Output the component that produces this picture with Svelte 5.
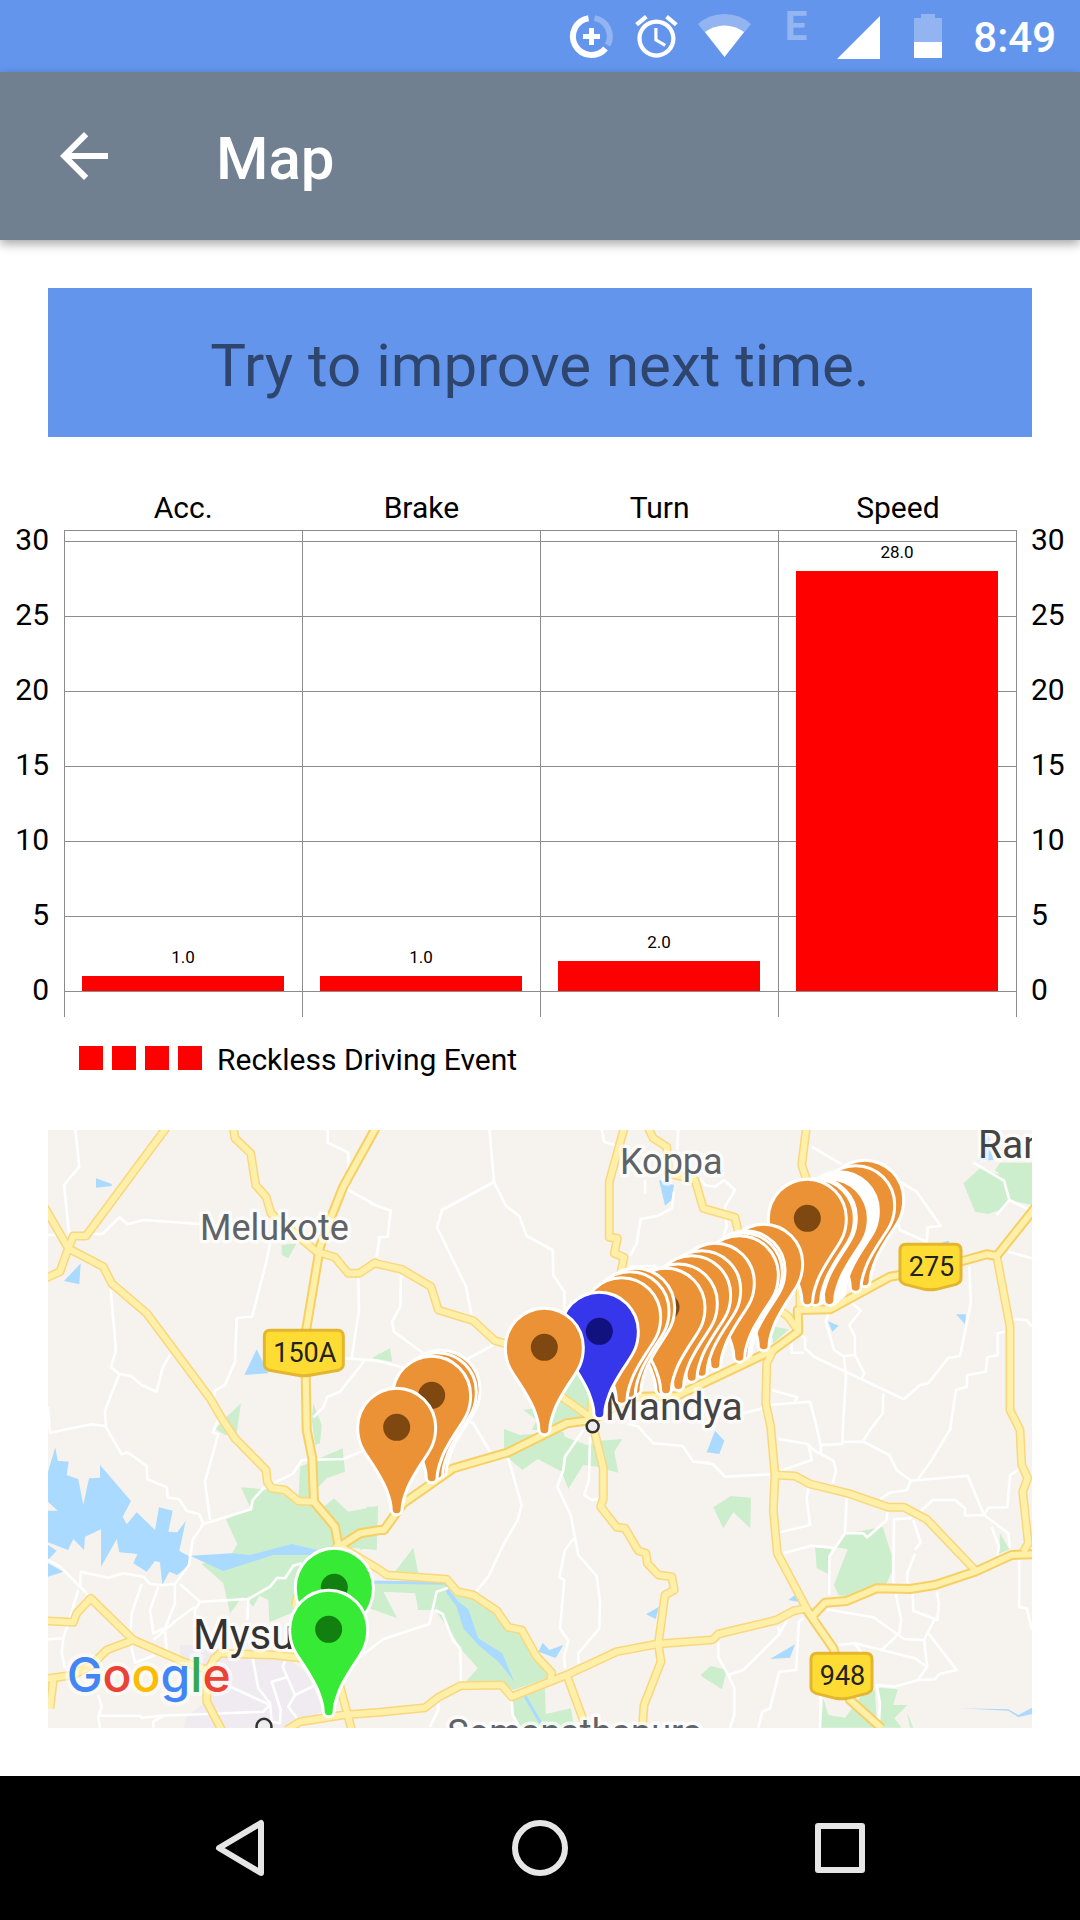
<script>
  const events = [
    { name: 'Acc.', value: 1 },
    { name: 'Brake', value: 1 },
    { name: 'Turn', value: 2 },
    { name: 'Speed', value: 28 }
  ];
  const ticks = [30, 25, 20, 15, 10, 5, 0];
  const unit = 15;

  // Map geometry is stored per tile, three tile units to one map unit.
  const tiles = {
    A: [-8, -10], B: [322, -10], C: [652, -10],
    D: [-8, 290], E: [322, 290], F: [652, 290]
  };
  let origin = tiles.A;
  function at(tile, x, y) {
    const [ox, oy] = tiles[tile];
    return [ox + x / 3, oy + y / 3];
  }
  function points(text) {
    return text.split(' ').map((p) => {
      if (tiles[p[0]]) {
        origin = tiles[p[0]];
        p = p.slice(1);
      }
      const [x, y] = p.split(',').map(Number);
      return (origin[0] + x / 3).toFixed(1) + ',' + (origin[1] + y / 3).toFixed(1);
    }).join(' ');
  }
  const shapes = (text) => text.trim().split('\n').map((line) => points(line.trim()));

  const parks = shapes(`
    A725,375 770,370 745,415 725,405
    A603,850 560,890 528,925 D530,30 555,45 590,40
    A820,850 845,915 D840,70 825,75 815,0
    A1020,700 1000,713 1020,725
    B5,715 60,685 67,725
    D603,202 695,210 775,243 780,140 908,85 915,155 860,175 822,215 840,270 882,235 925,275 1014,258 1010,390 895,380 840,450 800,560 688,607 685,540 658,527 640,560 608,530 570,580 550,490 485,432 575,402 592,372 557,298 633,268
    E-10,260 24,260 20,345 0,380 -30,390
    E75,455 130,383 145,460
    E-40,485 230,485 240,520 310,525 380,590 415,630 455,635 545,770 430,810 390,795 290,782 323,745 275,690 245,640 195,570 145,570 135,520 40,515 82,595 -30,555
    E427,840 525,800 527,882 603,865 612,925 445,920 428,885
    E402,27 450,45 580,35 585,50 650,75 690,62 757,57 733,95 745,158 680,140 640,135 595,207 575,155 503,117 457,150 415,115 402,100
    B460,870 555,855 580,810 628,755 660,840 660,880 560,930 485,930 500,900
    C210,618 268,628 220,670
    C790,190 840,145 900,165 885,150 900,128 996,128 996,255 928,240 900,270 865,282 825,275
    F40,262 92,228 153,233 151,325 100,277 70,325
    F345,382 393,388 385,462 350,445
    F408,382 435,343 548,320 575,405 575,455 560,490 530,505 440,530 415,525 402,495 443,388
    F900,340 928,388 897,402
    F2,767 32,738 80,750 66,808
    E992,765 1020,740 1020,785
    F370,835 385,885 435,893 490,820 525,810 530,910 545,923 363,923
    F535,803 593,808 580,855 622,855 583,895 605,923 540,923
    F620,875 640,923 630,923`);

  const waters = shapes(`
    A168,175 215,192 215,198 168,203
    A122,430 118,493 72,483
    A650,688 685,760 613,765
    B867,180 912,195 905,240 885,257
    C865,40 880,120 835,122
    C383,603 416,617 397,635
    C768,583 798,583 795,613
    C725,368 745,362 750,372
    C160,655 175,630 170,655
    F45,32 73,62 58,102 20,97
    F265,540 285,525 295,545
    F210,717 285,673 270,713
    E828,583 867,560 857,597
    E518,668 538,690 580,675 557,714 505,695
    F780,865 925,868 955,885 996,863 996,882 955,892 925,872
    D24,155 46,82 53,122 86,125 80,165 115,178 130,255 147,175 180,173 180,135 273,243 248,290 260,313 290,277 345,330 357,262 398,272 385,335 412,337 437,303 418,393 450,410 447,435 412,465 388,455 367,495 360,427 345,423 320,455 280,430 292,402 238,397 230,358 183,440 183,328 135,350 132,390 100,357 84,390 24,367 24,272 53,272 24,245
    D24,375 50,392 24,420
    D24,430 70,455 24,470
    D450,407 575,400 630,405 755,372 845,393 810,405 700,405 550,453
    E225,490 265,545 295,568 325,655 397,700 433,785 385,725 325,675 280,625 260,560 230,520`);

  const streams = shapes(`
    D990,486 E225,490
    E465,828 515,915`);

  const urban = points('D420,675 455,675 540,705 740,710 800,760 850,870 770,923 430,923 440,890 490,850 490,760 420,735');

  const lanes = shapes(`
    A105,20 118,140 72,195 88,345
    A24,345 80,345
    A150,343 188,341 238,292 263,313 310,300 480,312
    A690,370 678,430 636,590 590,594 585,725 555,795 525,812 520,840 540,890 D530,10 518,38 535,42 495,185 510,300
    A212,510 228,690 213,742 238,762 195,872 198,920 D197,20 245,103 263,97 320,138 322,178 381,202 383,233 416,237 440,272 478,283 490,312 458,360 447,435 405,492 405,550 375,625 340,640 330,570 355,500
    A238,762 273,768 305,795 350,815 368,742 390,705
    A24,860 D30,38 155,13 197,18
    D490,312 633,268 638,240 670,205 760,160 785,120 910,117 975,90
    A975,720 900,815 862,830 850,862 820,892
    A910,715 1020,722
    A955,475 957,570 935,715
    A863,20 863,68 925,98 925,210 1020,262
    A1020,350 1010,410
    B358,20 372,186 216,270 201,322 288,500 304,582
    B372,186 408,258 448,288 470,348 548,390 550,465 583,515 583,570
    B0,250 62,272 53,350 28,352 20,410
    B93,465 91,560 66,605 72,635 158,698
    B0,718 100,742
    B290,718 370,675
    B693,20 703,65 735,75
    B925,20 922,90
    B825,180 825,222
    B912,215 905,265 865,287 812,297 800,370 780,408
    B780,440 860,437
    C335,80 425,133
    C590,180 650,215 722,318 683,322 680,365 600,330 590,300
    C820,128 912,182 928,240 890,285
    C928,240 990,270
    C0,175 15,195 45,200 72,180 105,210 75,260 80,320 70,350
    C925,395 996,415
    C808,440 812,550 780,708 745,713 685,790 660,795 612,838 490,780 345,712 315,685 315,655 300,640
    C275,640 275,698 312,698
    C455,548 482,572 448,615 465,650 465,705 430,708 402,690 378,605 388,570
    C465,705 493,760 485,775
    C432,712 438,770 430,900 F427,72 362,75 345,0 C330,845 205,855
    C215,810 292,832 285,845
    C130,880 188,865
    C550,820 548,880 510,930 F490,62
    F362,75 362,100
    F427,65 490,65 568,105 590,150 633,182 620,210 570,218 540,237
    C935,597 980,600 996,620
    C915,635 893,640 893,705 862,712 857,755 802,765 800,800 768,810 750,930 F752,25 695,120 650,182
    F633,182 803,167 852,285 795,287 795,265 765,240 698,240 660,275
    F852,285 925,340 930,385
    F852,285 865,263 922,262 930,165 955,150
    F875,320 897,380 892,405
    F958,420 958,562 980,565 996,630
    F235,57 325,72 340,90 400,122 408,152 398,190
    F325,72 335,120 235,155
    F325,205 320,235 330,315 240,337
    F440,235 435,340 388,410 388,525
    F435,340 490,340 502,352 560,300 562,275
    F250,400 335,377 405,383
    F635,295 582,298 580,480 603,600 598,640 545,690
    F640,300 662,368 645,388
    F645,402 622,460 622,490
    F638,520 640,572 712,600 717,550 710,515
    F705,595 672,660 682,740 655,778
    F685,640 770,750 718,762 705,778 655,780 583,800 530,795 540,850 537,905
    F672,660 612,657 520,592 380,568
    F415,675 465,670 545,690 645,715 680,740
    F465,670 485,700
    F0,128 38,132 75,170 210,163
    F55,665 55,712 85,765 103,805 103,885 90,923
    F85,765 130,750 235,645 265,595
    F235,620 240,645
    F310,595 297,605 288,750 238,755 210,865 187,875 175,923
    F362,825 360,923
    D24,420 60,440 120,500 145,525
    D120,500 122,455 205,473 250,460 310,470 330,492 365,495 405,492
    D305,492 275,580 270,660 285,728 345,705
    D24,658 70,655 115,510
    D70,655 65,700 75,745
    D420,492 480,545 625,537 690,500 712,473 735,475 760,437 785,430
    D625,537 622,600
    D480,545 465,570 465,620
    D375,635 380,690
    D340,660 410,600 465,560
    D175,825 185,860 175,890 180,923
    D175,887 300,887 305,893 365,887 670,875 690,855 560,795
    D340,923 340,905 370,887
    D635,700 655,805 690,850 695,905 720,910 722,870 695,785 740,772
    D740,710 728,740 765,825 745,860 775,900
    D765,825 835,792
    D940,725 1020,665 E40,657 178,612 200,515 235,503
    E195,570 218,582 248,660 270,685 273,785
    E415,115 455,255 443,300 400,375 355,470 318,515
    E285,0 310,10 360,95
    E640,30 585,110 580,150 562,200 602,285 625,405 680,468 690,545 688,625 625,700 625,730
    E612,355 585,390 568,472 583,480 570,625 595,662 582,710 585,745
    E660,50 657,180 643,225 665,240 685,237
    E770,10 805,20 850,70 938,78 970,125 1020,128
    E205,850 205,870 180,920
    E425,845 428,885 445,915`);

  const roads = shapes(`
    A385,15 138,348 100,348 85,385 60,455 10,478
    A10,255 85,385 190,440 215,490 320,580 510,835 545,895 D585,55 678,150 682,185 695,205 735,210 775,243 822,245
    A578,15 585,55 632,100 647,195 678,230 693,280 830,395 885,412 925,460 958,460 1005,428 B15,430 95,448 183,500 205,570 310,602 375,662 420,675
    D895,375 780,500 765,560
    D895,375 1020,450 E50,465 230,478 262,515 310,525 380,572 415,622 455,630 500,710 545,758 540,785
    C240,570 265,590 290,625
    C320,15 305,135 320,180 300,480 300,560
    B575,830 665,895
    B665,840 665,900
    B765,15 718,185 718,352 742,355 733,400 762,412 752,460
    B830,15 850,55 890,80 895,160 975,180 1000,265 C105,292 118,350
    C890,408 930,620 930,870 F960,30 965,135 983,175 968,215 985,370 970,395
    C220,690 200,730 197,850 F212,20 225,165 220,270 232,400 325,575 345,600
    F225,165 285,168 330,192 445,220 565,262 612,262 680,298 825,450
    E590,765 640,900 655,940
    E670,20 700,145 700,235 692,260 740,322 765,325 805,392 828,400 832,430 865,465 905,470 913,510 885,525 865,672 873,725 822,855 817,930
    D10,602 100,607 110,580 152,535 280,660 430,725 520,755
    D10,778 100,765 155,735 200,690 280,660
    D40,780 30,865
    D520,720 540,700 700,705 790,715
    D525,710 500,760 500,845 545,930
    D895,780 935,930
    D740,930 780,905 910,885 1020,877 E165,863 205,832 272,797 395,795 425,830 590,765 740,695 862,672 1020,660 F40,658 55,642 230,600 280,573 320,565`);

  const highways = shapes(`
    A1015,10 910,200 870,300 840,380 795,650 800,930 D817,115 822,245 885,320 897,385
    D890,385 960,340 1020,330 E42,330 100,250 250,145 415,97 590,10 665,0 B770,840 800,830 920,828 1020,780 C220,690 295,635 293,570 390,568 570,470 600,465 780,425 860,403 890,408 1020,245
    F335,590 375,548 440,543 530,505 630,507 705,495 825,455 935,405 1010,402
    F320,570 400,685 450,840 545,925`);

  const pins = [
    ['C', 494, 238], ['C', 467, 254], ['C', 418, 272], ['C', 414, 275], ['C', 409, 278],
    ['C', 405, 282], ['C', 401, 286], ['C', 397, 290], ['C', 393, 292],
    ['C', 388, 294], ['C', 352, 292], ['C', 346, 294], ['C', 322, 295], ['C', 191, 430],
    ['C', 138, 450], ['C', 130, 456], ['C', 118, 464], ['C', 46, 487], ['C', 5, 509],
    ['B', 965, 524], ['B', 925, 549], ['B', 874, 562], ['B', 888, 562], ['B', 797, 562],
    ['B', 780, 572], ['B', 755, 590], ['B', 688, 634, 'blue'], ['B', 523, 682],
    ['B', 213, 808], ['B', 202, 815], ['B', 185, 826], ['B', 80, 922],
    ['D', 883, 502, 'green'], ['D', 866, 628, 'green']
  ].map(([tile, x, y, color = 'orange']) => ({ pos: at(tile, x, y), color }));

  const shields = [
    { text: '150A', w: 81, pos: at('A', 670, 628) },
    { text: '275', w: 63, pos: at('C', 597, 370) },
    { text: '948', w: 63, pos: at('F', 330, 697) }
  ];
  const shieldPath = (w) =>
    `M7 1H${w - 7}Q${w - 1} 1 ${w - 1} 7V35Q${w - 1} 39 ${w - 6} 41L${w / 2 + 6} 46Q${w / 2} 47 ${w / 2 - 6} 46L6 41Q1 39 1 35V7Q1 1 7 1Z`;

  const places = [
    { text: 'Melukote', pos: at('A', 480, 359), kind: 'village' },
    { text: 'Koppa', pos: at('B', 750, 162), kind: 'village' },
    { text: 'Somanathapura', pos: at('E', 232, 975), kind: 'village' },
    { text: 'Mandya', pos: at('B', 704, 900), kind: 'town' },
    { text: 'Ramanagara', pos: at('C', 834, 115), kind: 'town' },
    { text: 'Mysuru', pos: at('D', 459, 688), kind: 'city' }
  ];
  const mandya = at('B', 668, 919);
  const mysuru = at('D', 672, 919);
  const logo = at('D', 80, 817);
</script>

<div class="page">
  <div class="status">
    <svg width="64" height="72" viewBox="560 0 64 72" aria-label="Data saver">
      <path class="ring faint" d="M594.500 18.100A18.500 18.500 0 0 1 607.600 45" />
      <path class="ring" d="M588.500 18.200A18.500 18.500 0 1 0 605.500 48.500" />
      <path class="ring thin" d="M583 36.500H600M591.500 28V45" />
    </svg>
    <svg width="64" height="72" viewBox="624 0 64 72" aria-label="Alarm">
      <path class="solid" transform="translate(631 11) scale(2.120)" d="M22 5.720l-4.600-3.860-1.290 1.530 4.600 3.860L22 5.720zM7.880 3.390L6.600 1.860 2 5.710l1.290 1.530 4.590-3.850zM12.500 8H11v6l4.750 2.850.75-1.230-4-2.370V8zM12 4c-4.970 0-9 4.030-9 9s4.020 9 9 9c4.970 0 9-4.030 9-9s-4.030-9-9-9zm0 16c-3.870 0-7-3.130-7-7s3.130-7 7-7 7 3.130 7 7-3.130 7-7 7z" />
    </svg>
    <svg width="72" height="72" viewBox="688 0 72 72" aria-label="Wi-Fi">
      <path class="dim" d="M724.500 57L698 24Q709 14 724.500 14T751 24Z" />
      <path class="solid" d="M724.500 57L705 32Q714 25.500 724.500 25.500T744 32Z" />
    </svg>
    <span class="network">E</span>
    <svg width="62" height="72" viewBox="832 0 62 72" aria-label="Signal">
      <path class="solid" d="M880 16V59H837Z" />
    </svg>
    <svg width="66" height="72" viewBox="894 0 66 72" aria-label="Battery">
      <path class="dim" d="M921 14H935V18H942V42H914V18H921Z" />
      <path class="solid" d="M914 42H942V58H914Z" />
    </svg>
    <time>8:49</time>
  </div>

  <header>
    <button class="back" aria-label="Back">
      <svg width="72" height="72" viewBox="0 0 24 24"><path class="solid" d="M20 11H7.830l5.590-5.590L12 4l-8 8 8 8 1.410-1.410L7.830 13H20v-2z" /></svg>
    </button>
    <h1>Map</h1>
  </header>

  <main>
    <p class="banner">Try to improve next time.</p>

    <section class="chart" aria-label="Reckless driving events">
      <div class="names">
        {#each events as e}<span>{e.name}</span>{/each}
      </div>
      <div class="axis left">
        {#each ticks as t}<span>{t}</span>{/each}
      </div>
      <div class="plot">
        <div class="lines">
          {#each ticks as t}<i></i>{/each}
        </div>
        <div class="columns">
          {#each events as e}
            <div class="column">
              <span>{e.value.toFixed(1)}</span>
              <div class="bar" style:height="{e.value * unit}px"></div>
            </div>
          {/each}
        </div>
      </div>
      <div class="axis right">
        {#each ticks as t}<span>{t}</span>{/each}
      </div>
    </section>

    <div class="legend">
      <div class="swatches"><i></i><i></i><i></i><i></i></div>
      <span>Reckless Driving Event</span>
    </div>

    <svg class="map" viewBox="0 0 984 598" role="img" aria-label="Trip map">
      <defs>
        <g id="pin">
          <path class="shape" d="M0-37.500A37.500 37.500 0 0 1 37.500 0C37.500 14 33 21 27 30C21 39 14 50 10 59C6 69 4 76 4 82A4 4 0 0 1-4 82C-4 76-6 69-10 59C-14 50-21 39-27 30C-33 21-37.500 14-37.500 0A37.500 37.500 0 0 1 0-37.500Z" />
          <circle class="dot" r="13.500" />
        </g>
      </defs>
      <polygon class="urban" points={urban} />
      {#each parks as p}<polygon class="park" points={p} />{/each}
      {#each waters as p}<polygon class="water" points={p} />{/each}
      {#each streams as p}<polyline class="stream" points={p} />{/each}
      {#each lanes as p}<polyline class="lane" points={p} />{/each}
      {#each roads as p}<polyline class="casing" points={p} />{/each}
      {#each highways as p}<polyline class="casing main" points={p} />{/each}
      {#each roads as p}<polyline class="road" points={p} />{/each}
      {#each highways as p}<polyline class="road" points={p} />{/each}

      {#each shields as s}
        <g transform="translate({s.pos[0]} {s.pos[1]})">
          <path class="shield" d={shieldPath(s.w)} />
          <text class="route" x={s.w / 2 + 1} y="33">{s.text}</text>
        </g>
      {/each}
      {#each places as p}
        <text class="place {p.kind}" x={p.pos[0]} y={p.pos[1]}>{p.text}</text>
      {/each}
      <circle class="stop" cx={mandya[0]} cy={mandya[1]} r="6" />
      <circle class="stop" cx={mysuru[0]} cy={mysuru[1]} r="7.500" />

      {#each pins as p}
        <use href="#pin" class={p.color} x={p.pos[0]} y={p.pos[1]} />
      {/each}

      <text class="logo" x={logo[0]} y={logo[1]}><tspan class="g-blue">G</tspan><tspan class="g-red">o</tspan><tspan class="g-yellow">o</tspan><tspan class="g-blue">g</tspan><tspan class="g-green">l</tspan><tspan class="g-red">e</tspan></text>
    </svg>
  </main>

  <nav>
    <button aria-label="Back"><svg width="72" height="72" viewBox="0 0 72 72"><path d="M57 11V61L15 36Z" /></svg></button>
    <button aria-label="Home"><svg width="72" height="72" viewBox="0 0 72 72"><circle cx="36" cy="36" r="25" /></svg></button>
    <button aria-label="Recent apps"><svg width="72" height="72" viewBox="0 0 72 72"><rect x="14" y="14" width="44" height="44" /></svg></button>
  </nav>
</div>

<style>
  :global(body) {
    margin: 0;
    background: #fff;
  }
  .page {
    min-height: 100vh;
    display: flex;
    flex-direction: column;
    font-family: Roboto, 'Liberation Sans', sans-serif;
    color: #000;
  }
  button {
    border: 0;
    padding: 0;
    background: none;
    display: flex;
    align-items: center;
    justify-content: center;
  }
  .status {
    height: 72px;
    display: flex;
    justify-content: flex-end;
    align-items: center;
    padding-right: 24px;
    background: #6495ed;
    color: #fff;
  }
  .solid { fill: #fff; }
  .dim { fill: #fff; fill-opacity: 0.3; }
  .ring { fill: none; stroke: #fff; stroke-width: 6; }
  .thin { stroke-width: 5; }
  .faint { stroke-opacity: 0.3; }
  .network {
    width: 72px;
    height: 64px;
    line-height: 46px;
    font-size: 40px;
    font-weight: 700;
    text-align: center;
    opacity: 0.3;
  }
  time {
    min-width: 96px;
    padding-top: 3px;
    font-size: 42px;
    line-height: 48px;
    font-weight: 500;
    text-align: right;
  }
  header {
    height: 168px;
    display: flex;
    align-items: center;
    gap: 96px;
    padding-left: 48px;
    background: #708090;
    color: #fff;
    box-shadow: 0 4px 10px rgba(0, 0, 0, 0.35);
  }
  h1 {
    margin: 0;
    padding-top: 5px;
    font-size: 60px;
    line-height: 70px;
    font-weight: 500;
  }
  main {
    padding: 48px 0;
  }
  .banner {
    margin: 0 48px;
    padding: 43px 0 36px;
    background: #6495ed;
    color: #2e456d;
    font-size: 60px;
    line-height: 70px;
    text-align: center;
  }
  .chart {
    margin-top: 53px;
    display: grid;
    grid-template-columns: 64px 1fr 63px;
    row-gap: 4px;
    font-size: 30px;
    line-height: 36px;
  }
  .names {
    grid-column: 2;
    display: grid;
    grid-template-columns: repeat(4, 1fr);
    text-align: center;
  }
  .axis {
    grid-row: 2;
    height: 486px;
    margin-top: -8px;
    display: flex;
    flex-direction: column;
    justify-content: space-between;
  }
  .left {
    padding-right: 15px;
    text-align: right;
  }
  .right {
    padding-left: 14px;
  }
  .plot {
    grid-row: 2;
    grid-column: 2;
    display: grid;
    height: 487px;
    box-sizing: border-box;
    border-top: 1px solid #8c8c8c;
    border-right: 1px solid #8c8c8c;
  }
  .lines, .columns {
    grid-area: 1 / 1;
  }
  .lines {
    padding-top: 10px;
  }
  .lines i {
    display: block;
    height: 74px;
    border-top: 1px solid #8c8c8c;
  }
  .lines i:last-child {
    height: 0;
  }
  .columns {
    display: grid;
    grid-template-columns: repeat(4, 1fr);
  }
  .column {
    display: flex;
    flex-direction: column;
    justify-content: flex-end;
    padding: 0 18px 26px 17px;
    border-left: 1px solid #8c8c8c;
    text-align: center;
    font-size: 17px;
    line-height: 20px;
  }
  .column span {
    margin-bottom: 9px;
  }
  .bar {
    background: #f00;
  }
  .legend {
    margin: 25px 0 52px 79px;
    display: flex;
    align-items: flex-start;
    gap: 15px;
    font-size: 30px;
    line-height: 36px;
  }
  .swatches {
    display: flex;
    gap: 9px;
    padding-top: 4px;
  }
  .swatches i {
    width: 24px;
    height: 24px;
    background: #f00;
  }
  .map {
    display: block;
    width: calc(100% - 96px);
    margin: 0 48px;
    background: #f6f3ee;
    overflow: hidden;
  }
  .urban { fill: #efebf0; }
  .park { fill: #cdeecd; }
  .water { fill: #aadaff; }
  polyline { fill: none; stroke-linejoin: round; }
  .stream { stroke: #aadaff; stroke-width: 3; }
  .lane { stroke: #fff; stroke-width: 2.600; }
  .casing { stroke: #fad77c; stroke-width: 9; }
  .casing.main { stroke: #f6cf65; stroke-width: 10; }
  .road { stroke: #fff0a9; stroke-width: 6; }
  .shield { fill: #ffdc33; stroke: #e4b62f; stroke-width: 3; }
  .route { font-size: 27px; text-anchor: middle; fill: #222; }
  .place {
    fill: #5f6368;
    stroke: #fff;
    stroke-opacity: 0.7;
    stroke-width: 7;
    stroke-linejoin: round;
    paint-order: stroke;
    font-size: 36px;
  }
  .town { fill: #444; font-size: 39px; }
  .city { fill: #333; font-size: 42px; }
  .stop { fill: #eee; stroke: #333; stroke-width: 2.500; }
  .shape { stroke: #fff; stroke-width: 6; paint-order: stroke; }
  .orange { fill: #ea9235; color: #804811; }
  .blue { fill: #3636ea; color: #111180; }
  .green { fill: #36ea36; color: #118011; }
  .dot { fill: currentColor; }
  .logo {
    font-family: Inter, sans-serif;
    font-size: 48px;
    font-weight: 500;
    stroke: #fff;
    stroke-opacity: 0.5;
    stroke-width: 8;
    stroke-linejoin: round;
    paint-order: stroke;
  }
  .g-blue { fill: #4285f4; }
  .g-red { fill: #ea4335; }
  .g-yellow { fill: #fbbc05; }
  .g-green { fill: #34a853; }
  nav {
    margin-top: auto;
    height: 144px;
    display: grid;
    grid-template-columns: repeat(3, 72px);
    justify-content: center;
    gap: 228px;
    background: #000;
  }
  nav svg {
    fill: none;
    stroke: #e6e6e6;
    stroke-width: 6;
    stroke-linejoin: round;
  }
</style>
